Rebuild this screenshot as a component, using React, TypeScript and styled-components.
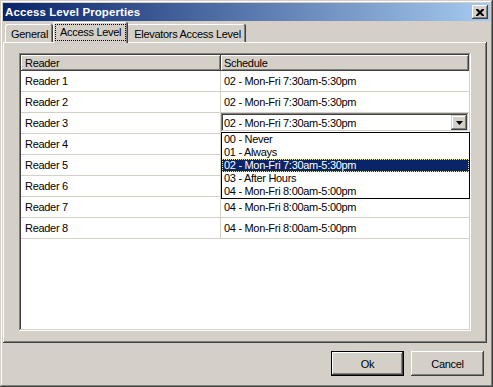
import React from 'react';
import styled, {createGlobalStyle, css} from 'styled-components';

const GlobalStyle = createGlobalStyle`
  html, body {
    margin: 0;
    padding: 0;
    background: #d4d0c8;
  }
  body {
    font-family: 'Liberation Sans', Arial, sans-serif;
    font-size: 11px;
    letter-spacing: -0.3px;
    color: #000;
  }
`;

// classic 3d edges
const raised = css`
  box-shadow: inset -1px -1px #404040, inset 1px 1px #fff, inset -2px -2px #808080;
`;

const sunken = css`
  box-shadow: inset -1px -1px #fff, inset 1px 1px #808080, inset -2px -2px #d4d0c8,
    inset 2px 2px #404040;
`;

const Window = styled.div`
  width: 493px;
  height: 387px;
  box-sizing: border-box;
  padding: 3px;
  display: flex;
  flex-direction: column;
  background: #d4d0c8;
  box-shadow: inset -1px -1px #404040, inset 1px 1px #d4d0c8, inset -2px -2px #808080,
    inset 2px 2px #fff;
`;

const TitleBar = styled.div`
  height: 18px;
  display: flex;
  align-items: center;
  justify-content: space-between;
  padding: 0 2px;
  background: linear-gradient(to right, #0a246a, #a6caf0);
`;

const Title = styled.span`
  color: #fff;
  font-weight: bold;
  font-size: 11.5px;
  letter-spacing: 0.1px;
`;

const CloseButton = styled.button`
  width: 16px;
  height: 14px;
  padding: 0;
  border: none;
  background: #d4d0c8;
  display: flex;
  align-items: center;
  justify-content: center;
  ${raised};
`;

const TabStrip = styled.div`
  height: 20px;
  margin-top: 1px;
  padding-left: 2px;
  display: flex;
  align-items: flex-end;
`;

const Tab = styled.div<{$active?: boolean; $padLeft?: number}>`
  height: 18px;
  box-sizing: border-box;
  display: flex;
  align-items: center;
  padding: 1px 5px 0 ${(p) => p.$padLeft ?? 6}px;
  background: #d4d0c8;
  border-radius: 2px 2px 0 0;
  box-shadow: inset -1px 0 #404040, inset 1px 1px #fff, inset -2px 0 #808080;
  white-space: nowrap;

  ${(p) =>
    p.$active &&
    css`
      position: relative;
      z-index: 1;
      height: 21px;
      margin-bottom: -1px;
      margin-right: -2px;
      padding: 0 2px 1px 2px;
    `}
`;

const FocusLabel = styled.span`
  border: 1px dotted #000;
  padding: 1px 4px 1px 4px;
  line-height: 13px;
`;

const Panel = styled.div`
  height: 301px;
  box-sizing: border-box;
  margin-right: 3px;
  padding: 11px 16px 12px 16px;
  display: flex;
  box-shadow: inset -1px -1px #404040, inset 1px 1px #fff, inset -2px -2px #808080;
`;

const Grid = styled.div`
  flex: 1;
  padding: 2px;
  background: #fff;
  display: flex;
  flex-direction: column;
  ${sunken};
`;

const HeaderRow = styled.div`
  height: 16px;
  display: grid;
  grid-template-columns: 200px 1fr;
`;

const HeaderCell = styled.div<{$first?: boolean}>`
  display: flex;
  align-items: center;
  padding-left: ${(p) => (p.$first ? 4 : 3)}px;
  background: #d4d0c8;
  box-shadow: inset -1px -1px #404040, inset 1px 1px #fff, inset -2px -2px #808080;
`;

const Row = styled.div`
  height: 21px;
  box-sizing: border-box;
  display: grid;
  grid-template-columns: 200px 1fr;
  border-bottom: 1px solid #d4d0c8;
`;

const Cell = styled.div<{$first?: boolean}>`
  display: flex;
  align-items: center;
  padding-left: ${(p) => (p.$first ? 4 : 3)}px;
  ${(p) => p.$first && 'border-right: 1px solid #d4d0c8;'}
  white-space: nowrap;
`;

const ComboCell = styled.div`
  position: relative;
  align-self: start;
`;

const Combo = styled.div`
  height: 19px;
  box-sizing: border-box;
  padding: 2px;
  display: flex;
  align-items: center;
  background: #fff;
  ${sunken};
`;

const ComboText = styled.span`
  flex: 1;
  padding-left: 1px;
`;

const ArrowButton = styled.div`
  width: 16px;
  height: 15px;
  display: flex;
  align-items: center;
  justify-content: center;
  background: #d4d0c8;
  box-shadow: inset -1px -1px #404040, inset 1px 1px #d4d0c8, inset -2px -2px #808080,
    inset 2px 2px #fff;
`;

const DropList = styled.ul`
  position: absolute;
  top: 19px;
  left: 0;
  right: -1px;
  margin: 0;
  padding: 0;
  list-style: none;
  background: #fff;
  border: 1px solid #000;
  z-index: 2;
`;

const DropItem = styled.li<{$selected?: boolean}>`
  height: 13px;
  line-height: 13px;
  padding-left: 2px;
  white-space: nowrap;
  ${(p) =>
    p.$selected &&
    css`
      background: #0a246a;
      color: #fff;
      outline: 1px dotted #f0f080;
      outline-offset: -1px;
    `}
`;

const ButtonRow = styled.div`
  display: flex;
  justify-content: flex-end;
  gap: 7px;
  padding: 8px 6px 0 0;
`;

const Button = styled.button<{$default?: boolean}>`
  width: 73px;
  height: 25px;
  padding: 0;
  border: none;
  background: #d4d0c8;
  font-family: 'Liberation Sans', Arial, sans-serif;
  font-size: 11px;
  letter-spacing: -0.3px;
  color: #000;
  box-shadow: inset -1px -1px #404040, inset 1px 1px #fff, inset -2px -2px #808080;
  ${(p) =>
    p.$default &&
    css`
      box-shadow: inset 0 0 0 1px #000, inset -2px -2px #404040, inset 2px 2px #fff,
        inset -3px -3px #808080;
    `}
`;

const schedules = [
  '00 - Never',
  '01 - Always',
  '02 - Mon-Fri 7:30am-5:30pm',
  '03 - After Hours',
  '04 - Mon-Fri 8:00am-5:00pm',
];

// rows 4-6 sit under the open drop list, their values don't show
const readers: {name: string; schedule: number | null; editing?: boolean}[] = [
  {name: 'Reader 1', schedule: 2},
  {name: 'Reader 2', schedule: 2},
  {name: 'Reader 3', schedule: 2, editing: true},
  {name: 'Reader 4', schedule: null},
  {name: 'Reader 5', schedule: null},
  {name: 'Reader 6', schedule: null},
  {name: 'Reader 7', schedule: 4},
  {name: 'Reader 8', schedule: 4},
];

function CloseIcon() {
  return (
    <svg width="8" height="7" viewBox="0 0 8 7">
      <path
        d="M0 0h2l2 2 2-2h2v1L5.5 3.5 8 6v1H6L4 5 2 7H0V6l2.5-2.5L0 1z"
        fill="#000"
      />
    </svg>
  );
}

function DownArrow() {
  return (
    <svg width="7" height="4" viewBox="0 0 7 4">
      <path d="M0 0h7L3.5 4z" fill="#000" />
    </svg>
  );
}

function ScheduleCombo({value}: {value: number}) {
  return (
    <ComboCell>
      <Combo>
        <ComboText>{schedules[value]}</ComboText>
        <ArrowButton>
          <DownArrow />
        </ArrowButton>
      </Combo>
      <DropList>
        {schedules.map((s, i) => (
          <DropItem key={s} $selected={i === value}>
            {s}
          </DropItem>
        ))}
      </DropList>
    </ComboCell>
  );
}

export default function App() {
  return (
    <>
      <GlobalStyle />
      <Window>
        <TitleBar>
          <Title>Access Level Properties</Title>
          <CloseButton>
            <CloseIcon />
          </CloseButton>
        </TitleBar>
        <TabStrip>
          <Tab>General</Tab>
          <Tab $active>
            <FocusLabel>Access Level</FocusLabel>
          </Tab>
          <Tab $padLeft={8}>Elevators Access Level</Tab>
        </TabStrip>
        <Panel>
          <Grid>
            <HeaderRow>
              <HeaderCell $first>Reader</HeaderCell>
              <HeaderCell>Schedule</HeaderCell>
            </HeaderRow>
            {readers.map((r) => (
              <Row key={r.name}>
                <Cell $first>{r.name}</Cell>
                {r.editing && r.schedule !== null ? (
                  <ScheduleCombo value={r.schedule} />
                ) : (
                  <Cell>{r.schedule !== null ? schedules[r.schedule] : ''}</Cell>
                )}
              </Row>
            ))}
          </Grid>
        </Panel>
        <ButtonRow>
          <Button $default>Ok</Button>
          <Button>Cancel</Button>
        </ButtonRow>
      </Window>
    </>
  );
}
